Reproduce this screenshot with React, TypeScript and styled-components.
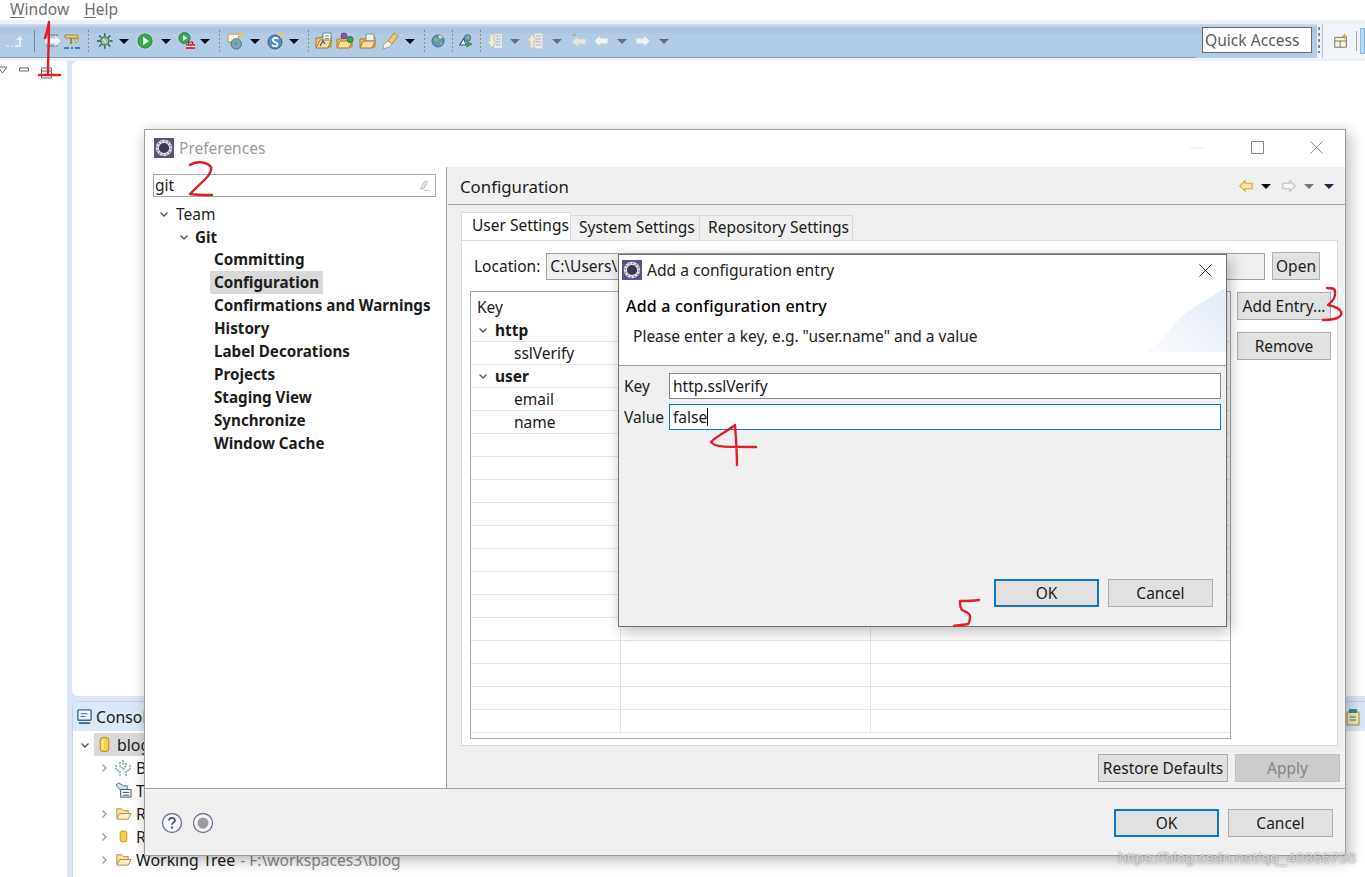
import React from 'react';
import styled, { createGlobalStyle, css } from 'styled-components';

const Global = createGlobalStyle`
  html, body { margin: 0; padding: 0; background: #fff; }
  body { font-family: "Noto Sans", "Open Sans", sans-serif; color: #1a1a1a; }
  * { box-sizing: border-box; }
`;

const Page = styled.div`
  position: relative; width: 1365px; height: 877px; overflow: hidden; background: #fff;
  display: flex; flex-direction: column;
`;
const MenuBar = styled.div`
  height: 20px; flex: none; display: flex; gap: 15px; padding-left: 10px;
  font-size: 15.6px; line-height: 18px; color: #6f6f6f;
  span u { text-underline-offset: 2px; }
`;
const Toolbar = styled.div`
  height: 41px; flex: none; display: flex; background: #eef2f8; padding-top: 4px;
`;
const ToolStrip = styled.div`
  width: 1317px; height: 34px; flex: none; position: relative; display: flex; align-items: center;
  background: linear-gradient(#cfdfef 0, #adc5df 4px, #adc5df 9px, #b2cce6 9px, #b2cce6 100%);
  &::after { content: ""; position: absolute; left: 0; bottom: 0; width: 1196px; height: 1px; background: #8b9ab5; }
`;
const ToolCell = styled.div<{ $w: number }>`
  width: ${p => p.$w}px; flex: none; display: flex; align-items: center; justify-content: center; height: 20px;
`;
const Caret = styled.i<{ $c?: string }>`
  display: block; width: 0; height: 0;
  border-left: 5px solid transparent; border-right: 5px solid transparent;
  border-top: 5.5px solid ${p => p.$c || '#0a0a14'};
`;
const Sep = styled.i<{ $solid?: boolean }>`
  display: block; width: 1px; height: 22px;
  background: ${p => (p.$solid ? '#6f88a6' : 'repeating-linear-gradient(#8d8d7c 0 2px, transparent 2px 4px)')};
`;
const QuickAccess = styled.div`
  position: absolute; left: 1202px; top: 3px; width: 110px; height: 26px; z-index: 1;
  background: #fff; border: 1px solid #6a6a6a; font-size: 15.6px; line-height: 24px; padding-left: 2px; color: #5d5d5d; white-space: nowrap;
`;
const Grip = styled.i`
  position: absolute; left: 1318px; top: 3px; width: 2px; height: 26px; z-index: 1;
  background: repeating-linear-gradient(#7c8797 0 3px, transparent 3px 6px);
`;
const PerspectiveBar = styled.div`
  flex: 1; height: 34px; margin-left: 5px; border-left: 1px solid #a9bfdc; display: flex; align-items: center;
  background: #f1f4fa; padding-left: 10px;
`;
const PerspSep = styled.i`
  display: block; width: 1px; height: 20px; background: #a5a5a5; margin: 0 3px 0 7px;
`;
const PerspActive = styled.i`
  display: block; flex: 1; height: 26px; background: #bcd6f3; border: 1px solid #8cb4e3;
`;

const Workspace = styled.div`
  flex: 1; display: flex; min-height: 0;
`;
const LeftPane = styled.div`
  width: 67px; flex: none; background: #fff; display: flex; gap: 11px; align-items: flex-start; padding-top: 4px; margin-left: -2px;
`;
const Center = styled.div`
  flex: 1; display: flex; flex-direction: column; padding-left: 5px; background: #dbe5f5; min-width: 0; margin-left: 2px;
`;
const Editor = styled.div`
  height: 635px; flex: none; background: #fff; border-radius: 6px 0 0 6px; margin-bottom: 5px;
`;
const ConsolePanel = styled.div`
  flex: 1; background: #fff; border-top-left-radius: 8px; overflow: hidden; display: flex; flex-direction: column;
  border-left: 1px solid #c4d1e6;
`;
const ConsoleTabs = styled.div`
  height: 30px; flex: none; background: #dce8f7; border-top: 1px solid #c2d0e6; display: flex; align-items: center;
  padding-left: 3px; gap: 3px; font-size: 15.8px; justify-content: flex-start; position: relative;
`;
const ConsoleTrailing = styled.div`
  position: absolute; right: 3px; top: 6px; display: flex;
`;
const ConsoleTree = styled.div`
  display: flex; flex-direction: column; padding-top: 2px;
`;
const ConsoleRow = styled.div<{ $depth: number }>`
  height: 23px; display: flex; align-items: center; font-size: 15.9px; white-space: nowrap;
  padding-left: ${p => p.$depth}px;
`;
const Chev = styled.span<{ $w?: number }>`
  width: ${p => p.$w ?? 14}px; flex: none; display: flex; align-items: center; justify-content: flex-start;
`;
const Picked = styled.span`
  display: flex; align-items: center; gap: 4px; height: 23px; background: #d9d9d9; padding: 0 30px 0 2px;
`;
const Muted = styled.span`
  color: #8b8b8b; margin-left: 5px; font-size: 15.6px;
`;
const RowIcon = styled.span`
  width: 20px; flex: none; display: flex; justify-content: center; margin-right: 3px;
`;

const PrefWindow = styled.div`
  position: absolute; left: 144px; top: 129px; width: 1202px; height: 727px; z-index: 2;
  background: #fff; border: 1px solid #9d9d9d;
  box-shadow: 3px 4px 14px rgba(0,0,0,.3); display: flex; flex-direction: column;
`;
const TitleBar = styled.div`
  height: 37px; flex: none; display: flex; align-items: center; padding: 0 0 2px 9px; font-size: 15.5px; color: #9a9a9a; gap: 5px; position: relative;
`;
const WinControls = styled.div`
  margin-left: auto; display: flex; align-items: center;
`;
const WinBtn = styled.span<{ $w: number }>`
  width: ${p => p.$w}px; display: flex; justify-content: center; align-items: center;
`;
const PrefBody = styled.div`
  height: 621px; flex: none; display: flex;
`;
const PrefNav = styled.div`
  width: 302px; flex: none; border-right: 1px solid #a0a0a0; padding: 7px 0 0 8px; display: flex; flex-direction: column;
`;
const NavSearch = styled.div`
  width: 283px; height: 23px; flex: none; border: 1px solid #a9a9a9; font-size: 15.5px; line-height: 21px; padding-left: 1px;
  display: flex; justify-content: space-between; align-items: center; padding-right: 3px; color: #222;
`;
const NavTree = styled.div`
  margin-top: 5px; display: flex; flex-direction: column;
`;
const NavRow = styled.div<{ $indent: number; $strong?: boolean }>`
  height: 23px; display: flex; align-items: center; padding-left: ${p => p.$indent}px; white-space: nowrap;
  font-size: ${p => (p.$strong ? 15.2 : 15.5)}px;
  font-weight: ${p => (p.$strong ? 700 : 400)}; color: #1c1c1c;
`;
const NavLabel = styled.span<{ $sel?: boolean }>`
  padding: 0 4px; height: 23px; line-height: 22px;
  ${p => p.$sel && css`background: #d9d9d9;`}
`;
const PrefMain = styled.div`
  flex: 1; min-width: 0; background: #f0f0f0; display: flex; flex-direction: column;
`;
const MainHead = styled.div`
  height: 38px; flex: none; border-bottom: 1px solid #a3a3a3; display: flex; align-items: center; padding: 1px 0 0 12px;
  font-size: 16.8px; color: #1c1c1c; margin-left: 1px;
`;
const HeadNav = styled.div`
  margin-left: auto; display: flex; align-items: center; gap: 10px; padding-right: 11px;
`;
const HeadGroup = styled.div`
  display: flex; align-items: center; gap: 7px;
`;
const Tabs = styled.div`
  margin: 7px 0 0 14px; height: 28px; flex: none; display: flex; align-items: flex-end; font-size: 15.5px; white-space: nowrap;
`;
const Tab = styled.div<{ $active?: boolean; $w: number }>`
  width: ${p => p.$w}px; border: 1px solid #d9d9d9;
  ${p => p.$active
    ? css`height: 28px; line-height: 25px; background: #fff; border-bottom: none; padding-left: 10px;`
    : css`height: 25px; line-height: 23px; background: #f0f0f0; border-left: none; border-bottom: none; padding-left: 8px;`}
`;
const TabPanel = styled.div`
  height: 506px; flex: none; margin: 0 7px 0 14px; background: #fff; border: 1px solid #d9d9d9; display: flex; flex-direction: column;
  padding-top: 11px;
`;
const LocationRow = styled.div`
  display: flex; align-items: center; height: 28px; padding: 0 17px 0 12px; font-size: 15.5px; flex: none;
`;
const LocationInput = styled.div`
  flex: 1; height: 27px; margin: 0 7px 0 6px; background: #f0f0f0; border: 1px solid #9f9f9f; padding-left: 3px; line-height: 25px;
`;
const Btn = styled.div<{ $w: number; $primary?: boolean; $disabled?: boolean }>`
  width: ${p => p.$w}px; height: 28px; flex: none; text-align: center; font-size: 15.5px; line-height: 26px; color: #1c1c1c;
  background: #e1e1e1; border: 1px solid #adadad; white-space: nowrap;
  ${p => p.$primary && css`border: 2px solid #0a78c8; line-height: 24px;`}
  ${p => p.$disabled && css`background: #cccccc; border-color: #bfbfbf; color: #858585;`}
`;
const TableRow = styled.div`
  display: flex; margin-top: 11px; padding-left: 8px; flex: 1; min-height: 0; margin-bottom: 6px;
`;
const Table = styled.div`
  width: 761px; flex: none; border: 1px solid #a8a8a8; display: flex; flex-direction: column; overflow: hidden; padding-top: 4px;
`;
const Row = styled.div<{ $head?: boolean }>`
  height: 23px; flex: none; display: grid; grid-template-columns: 150px 250px 1fr; font-size: 15.5px;
  ${p => (p.$head ? css`padding-bottom: 3px;` : css`border-bottom: 1px solid #e4e4e4;`)}
`;
const Cell = styled.div<{ $indent?: number; $strong?: boolean }>`
  border-right: 1px solid #e4e4e4; display: flex; align-items: center; padding-left: ${p => p.$indent ?? 6}px;
  font-weight: ${p => (p.$strong ? 700 : 400)}; white-space: nowrap;
  &:last-child { border-right: none; }
`;
const SideButtons = styled.div`
  display: flex; flex-direction: column; gap: 12px; margin-left: 6px; padding-top: 1px;
`;
const BottomButtons = styled.div`
  display: flex; justify-content: flex-end; gap: 7px; padding: 8px 5px 0 0; flex: none;
`;
const PrefFooter = styled.div`
  flex: 1; background: #f0f0f0; border-top: 1px solid #a3a3a3; display: flex; align-items: center; padding: 2px 12px 0 16px; gap: 9px;
`;
const FooterButtons = styled.div`
  margin-left: auto; display: flex; gap: 9px;
`;

const Dialog = styled.div`
  position: absolute; left: 618px; top: 254px; width: 609px; height: 373px; z-index: 3;
  background: #f0f0f0; border: 1px solid #6f6f6f; box-shadow: 3px 4px 14px rgba(0,0,0,.28); display: flex; flex-direction: column;
`;
const DialogHead = styled.div`
  height: 111px; flex: none; position: relative; background: #fff; border-bottom: 1px solid #a0a0a0; overflow: hidden;
`;
const DialogTitle = styled.div`
  height: 30px; display: flex; align-items: center; padding-left: 3px; gap: 5px; font-size: 15.6px; color: #222; white-space: nowrap;
`;
const DialogClose = styled.span`
  margin-left: auto; margin-right: 14px; display: flex;
`;
const DialogHeading = styled.div`
  margin: 10px 0 0 7px; font-size: 16px; font-weight: 500; letter-spacing: .2px; color: #000; line-height: 22px; white-space: nowrap;
`;
const DialogDesc = styled.div`
  margin: 9px 0 0 14px; font-size: 15.5px; color: #222; line-height: 20px; white-space: nowrap;
`;
const Wedge = styled.svg`
  position: absolute; right: 0; top: 30px;
`;
const DialogForm = styled.div`
  padding: 7px 5px 0 5px; display: grid; grid-template-columns: 45px 1fr; row-gap: 5px; align-items: center; font-size: 15.5px;
`;
const Field = styled.div<{ $focus?: boolean }>`
  height: 26px; background: #fff; border: 1px solid ${p => (p.$focus ? '#0a78c8' : '#8a8a8a')}; padding-left: 3px; line-height: 24px; font-size: 15.5px;
  display: flex; align-items: center;
`;
const Cursor = styled.i`
  display: block; width: 1px; height: 18px; background: #000;
`;
const DialogButtons = styled.div`
  margin-top: auto; display: flex; justify-content: flex-end; gap: 9px; padding: 0 13px 19px 0;
`;
const Annotations = styled.svg`
  position: absolute; left: 0; top: 0; z-index: 4; pointer-events: none;
`;
const Watermark = styled.div`
  position: absolute; right: 9px; bottom: 10px; z-index: 5; font-family: "Liberation Sans", sans-serif; font-size: 15.5px; line-height: 18px;
  color: rgba(255,255,255,.6); text-shadow: 0 0 2px rgba(90,90,90,.85); white-space: nowrap;
`;

const Ic = ({ n, s = 18 }: { n: string; s?: number }) => {
  const svg = (c: React.ReactNode) => <svg width={s} height={s} viewBox="0 0 18 18" fill="none">{c}</svg>;
  switch (n) {
    case 'ret': return svg(<><path d="M1 14h3M6 14h2" stroke="#d8e0ea" strokeWidth="1.6" /><path d="M10 14h5V6" stroke="#e6ecf3" strokeWidth="2" /><path d="M11 8l4-4 3 4z" fill="#eef2f6" /></>);
    case 'lines': return svg(<><path d="M2 3h12M2 14h12" stroke="#7f8fa3" strokeWidth="1.6" /><path d="M1 6.5h10V3.5L17 9l-6 5.5v-3H1z" fill="#f3f5f7" stroke="#c7d1dc" strokeWidth=".6" /></>);
    case 'tee': return svg(<><path d="M2 3h13v3H2z" fill="#ecd37a" stroke="#a08537" /><path d="M8 6v6" stroke="#a08537" strokeWidth="2.2" /><path d="M11 7h5l-2.5 4z" fill="#f0d97f" stroke="#a08537" strokeWidth=".6" /><path d="M1 16h5M12 16h5" stroke="#2f5f96" strokeWidth="1.5" /><path d="M8 16h2" stroke="#2f5f96" strokeWidth="1.5" /></>);
    case 'bug': return svg(<><circle cx="9" cy="9" r="4.2" fill="#8fc3a0" stroke="#2d5b4a" /><path d="M7.5 7.5l3 3" stroke="#d3ecd9" strokeWidth="1.4" /><path d="M9 1v3M9 14v3M1 9h3M14 9h3M3.3 3.3l2.2 2.2M14.7 3.3l-2.2 2.2M3.3 14.7l2.2-2.2M14.7 14.7l-2.2-2.2" stroke="#2d4b4a" strokeWidth="1.3" /></>);
    case 'run': return svg(<><circle cx="9" cy="9" r="7.8" fill="#38a94f" stroke="#d8ecd0" strokeWidth="1" /><circle cx="9" cy="9" r="7.2" stroke="#1a8038" strokeWidth=".8" /><path d="M7 4.8l6 4.2-6 4.2z" fill="#f7fbef" /></>);
    case 'ext': return svg(<><circle cx="6.5" cy="6" r="5.6" fill="#38a94f" stroke="#177a36" strokeWidth=".8" /><path d="M5 3.2l4.4 2.8L5 8.8z" fill="#fff" /><path d="M8 12h9v5H8z" fill="#e2343c" /><path d="M10.5 12v-2h4v2" stroke="#b3141c" strokeWidth="1.2" /><path d="M8 14.4h9" stroke="#fff" /></>);
    case 'newserver': return svg(<><path d="M1 2h11v8H1z" fill="#f9f5e2" stroke="#b99a4a" /><circle cx="9.5" cy="12" r="5.4" fill="#7ea6bd" stroke="#4b7596" /><path d="M8 9l3 1-1 3-3 1z" fill="#6f9f62" /><path d="M14 0v6M11 3h6" stroke="#e8cb55" strokeWidth="1.7" /></>);
    case 'spring': return svg(<><circle cx="8" cy="10" r="7" fill="#5a8fbd" stroke="#2d5c8a" /><path d="M11 7C9 5 5 6 6 8.5S11 10 10.5 12.5 6.500 14.500 5 13" stroke="#fff" strokeWidth="1.7" /><path d="M14 0v6M11 3h6" stroke="#e8cb55" strokeWidth="1.7" /></>);
    case 'open1': return svg(<><path d="M1 6h5l1-2h9v11H1z" fill="#f1c869" stroke="#a87b24" /><path d="M8 1h8v9H8z" fill="#fff" stroke="#6d87ad" /><path d="M10 4h4M10 6.500h4" stroke="#6d87ad" /><path d="M5 8l-4 8h12l3-8z" fill="#f8dd98" stroke="#a87b24" /><path d="M5 14l3-5 2 3" stroke="#2f5f96" strokeWidth="1.3" /></>);
    case 'open2': return svg(<><path d="M1 7h5l1-2h9v10H1z" fill="#f1c869" stroke="#a87b24" /><path d="M4 9L1 16h12l3-7z" fill="#f8dd98" stroke="#a87b24" /><circle cx="8" cy="4" r="3" fill="#7a5fb0" stroke="#5a4a85" /><circle cx="14" cy="7.500" r="3" fill="#3f9f55" stroke="#2f7a3b" /></>);
    case 'open3': return svg(<><path d="M1 7h5l1-2h9v10H1z" fill="#f1c869" stroke="#a87b24" /><path d="M7 2h8v7H7z" fill="#eef1f4" stroke="#8b95a1" /><path d="M4 9L1 16h12l3-7z" fill="#f8dd98" stroke="#a87b24" /></>);
    case 'brush': return svg(<><path d="M12 1l4 3-6 8-4-3z" fill="#f0c97a" stroke="#b58b3a" /><path d="M6 9l4 3-3 3-6 2 1-5z" fill="#f7f3e4" stroke="#9a8a66" strokeWidth=".7" /></>);
    case 'globe': return svg(<><circle cx="9" cy="9" r="7.8" fill="#5a93bd" stroke="#2c5e86" /><path d="M4 5l4 0 2 3-3 3-3-3zM11 10l4 0-2 5-2-2z" fill="#86b673" /><path d="M9 2l2 4 4-1-2-3z" fill="#e6e2a6" /></>);
    case 'exttool': return svg(<><circle cx="11" cy="5" r="4.200" fill="#6a9cc0" stroke="#3f6b90" /><path d="M10 3l3 0 0 3-3 0z" fill="#8cbb6e" /><path d="M1 14l5-8 3 8z" fill="#fff" stroke="#2f5280" strokeWidth="1.3" /><path d="M10 9l7 4-7 4z" fill="#39a24e" stroke="#1d7a36" strokeWidth=".6" /></>);
    case 'docdown': return svg(<><path d="M7 1h9v16H7z" fill="#e6eaef" stroke="#b9c3cf" /><path d="M9 4h5M9 7h5M9 10h5M9 13h5" stroke="#a8b1bb" /><path d="M3 2h4v7h3l-5 7-5-7h3z" fill="#eee9cf" stroke="#c2c0a8" strokeWidth=".7" /></>);
    case 'docup': return svg(<><path d="M7 1h9v16H7z" fill="#e6eaef" stroke="#b9c3cf" /><path d="M9 4h5M9 7h5M9 10h5M9 13h5" stroke="#a8b1bb" /><path d="M5 2l5 7H7v7H3V9H0z" fill="#eee9cf" stroke="#c2c0a8" strokeWidth=".7" /></>);
    case 'lastedit': return svg(<><path d="M8 4L2 9.500l6 5.500v-3h8V7H8z" fill="#e8e8da" stroke="#c9d1d8" /><path d="M2 2l2 2M5 1v3" stroke="#9aa6b2" /></>);
    case 'back': return svg(<path d="M8 3L2 9l6 6v-3h8V6H8z" fill="#eff2f5" stroke="#c2cad3" />);
    case 'fwd': return svg(<path d="M10 3l6 6-6 6v-3H2V6h8z" fill="#eff2f5" stroke="#c2cad3" />);
    case 'backY': return svg(<path d="M8 3L2 9l6 6v-3h8V6H8z" fill="#fbe5a0" stroke="#d3a93d" strokeWidth="1.2" />);
    case 'fwdG': return svg(<path d="M10 3l6 6-6 6v-3H2V6h8z" fill="#f7f7f7" stroke="#bdbdbd" strokeWidth="1.2" />);
    case 'persp': return svg(<><path d="M2 5h13v11H2z" fill="#fbf6e2" stroke="#6b6b55" /><path d="M2 9h13M8 9v7" stroke="#6b6b55" /><path d="M13 1l1 2 2 1-2 1-1 2-1-2-2-1 2-1z" fill="#e7b93a" stroke="#a5832a" strokeWidth=".5" /></>);
    case 'eclipse': return svg(<><path d="M0 0h18v18H0z" fill="#5d4f80" /><circle cx="9" cy="9" r="7.4" fill="#e7e5ee" /><circle cx="9" cy="9" r="4.6" fill="#3a3654" /><circle cx="9" cy="9" r="6.1" stroke="#8c8ca0" strokeWidth="1.6" strokeDasharray="1.6 1.6" /></>);
    case 'eraser': return svg(<><path d="M4 13l5-9h4l-5 9z" fill="#e6e6e6" stroke="#b8b8b8" /><path d="M9 15h6" stroke="#bbb" /></>);
    case 'console': return svg(<><rect x="2" y="2" width="14" height="11" rx="1" fill="#eef4fb" stroke="#35699c" strokeWidth="1.5" /><path d="M5 6h7M5 9h5" stroke="#35699c" /><path d="M3 16h12" stroke="#35699c" strokeWidth="1.8" /></>);
    case 'repo': return svg(<><rect x="4.500" y="1.500" width="9" height="15" rx="3" fill="#f4cf4a" stroke="#b08a1e" /><path d="M7 4v10" stroke="#fbeca6" strokeWidth="2" /></>);
    case 'branches': return svg(<><path d="M9 1v5M6 3v4l3 3 3-3V3M2 6v4l4 3v4M16 6v4l-4 3v4" stroke="#5c9c9a" strokeWidth="1.3" strokeDasharray="2 .7" /></>);
    case 'tags': return svg(<><path d="M1 3l3-2 5 3 4 0v5H6z" fill="#cfe0f0" stroke="#4d7aa8" /><path d="M6 8h11v8H6z" fill="#fff" stroke="#33506f" /><path d="M8 11h7M8 14h7" stroke="#33506f" /></>);
    case 'folder': return svg(<><path d="M2 14V4h5l2 2h5v3" fill="#f7e2ab" stroke="#b18b3d" /><path d="M2 15l3-6h12l-3 6z" fill="#fbeec6" stroke="#b18b3d" /></>);
    case 'sm': return svg(<rect x="5" y="2.500" width="8" height="13" rx="2.500" fill="#f4cf4a" stroke="#b08a1e" />);
    case 'task': return svg(<><path d="M3 4h12v13H3z" fill="#f3e7b4" stroke="#a68a3c" /><path d="M5 1h8v4H5z" fill="#2f8f9a" /><path d="M6 9h6M6 12h6" stroke="#2f7f8a" /></>);
    default: return null;
  }
};
const Tri = ({ d = 'down', c = '#555' }: { d?: 'down' | 'right'; c?: string }) => (
  <svg width="10" height="10" viewBox="0 0 10 10" fill="none">
    {d === 'down' ? <path d="M1.500 3.500L5 7l3.500-3.500" stroke={c} strokeWidth="1.3" /> : <path d="M3.500 1.500L7 5 3.500 8.500" stroke={c} strokeWidth="1.3" />}
  </svg>
);

type T = { k: 'i' | 'c' | 'g' | 's' | 'l'; n?: string; x: number };
const tools: T[] = [
  { k: 'i', n: 'ret', x: 20 }, { k: 'l', x: 34 }, { k: 'i', n: 'lines', x: 51 }, { k: 'i', n: 'tee', x: 74 }, { k: 's', x: 88 },
  { k: 'i', n: 'bug', x: 103 }, { k: 'c', x: 123 }, { k: 'i', n: 'run', x: 145 }, { k: 'c', x: 165 }, { k: 'i', n: 'ext', x: 187 }, { k: 'c', x: 207 }, { k: 's', x: 219 },
  { k: 'i', n: 'newserver', x: 234 }, { k: 'c', x: 254 }, { k: 'i', n: 'spring', x: 277 }, { k: 'c', x: 296 }, { k: 's', x: 308 },
  { k: 'i', n: 'open1', x: 321 }, { k: 'i', n: 'open2', x: 345 }, { k: 'i', n: 'open3', x: 367 }, { k: 'i', n: 'brush', x: 393 }, { k: 'c', x: 412 }, { k: 's', x: 424 },
  { k: 'i', n: 'globe', x: 438 }, { k: 's', x: 452 }, { k: 'i', n: 'exttool', x: 466 }, { k: 's', x: 480 },
  { k: 'i', n: 'docdown', x: 494 }, { k: 'g', x: 515 }, { k: 'i', n: 'docup', x: 536 }, { k: 'g', x: 557 },
  { k: 'i', n: 'lastedit', x: 578 }, { k: 'i', n: 'back', x: 602 }, { k: 'g', x: 622 }, { k: 'i', n: 'fwd', x: 643 }, { k: 'g', x: 664 },
];
const cellWidth = (i: number) => {
  const prevEdge = i === 0 ? 0 : (tools[i - 1].x + tools[i].x) / 2;
  const nextEdge = i === tools.length - 1 ? tools[i].x + 10 : (tools[i].x + tools[i + 1].x) / 2;
  return nextEdge - prevEdge;
};

const navItems = ['Committing', 'Configuration', 'Confirmations and Warnings', 'History', 'Label Decorations', 'Projects', 'Staging View', 'Synchronize', 'Window Cache'];
const emptyRows = Array.from({ length: 13 });

export default function App() {
  return (
    <Page>
      <Global />
      <MenuBar>
        <span><u>W</u>indow</span>
        <span><u>H</u>elp</span>
      </MenuBar>
      <Toolbar>
        <ToolStrip>
          {tools.map((t, i) => (
            <ToolCell key={i} $w={cellWidth(i)}>
              {t.k === 'i' && <Ic n={t.n!} />}
              {t.k === 'c' && <Caret />}
              {t.k === 'g' && <Caret $c="#5f6f86" />}
              {t.k === 's' && <Sep />}
              {t.k === 'l' && <Sep $solid />}
            </ToolCell>
          ))}
          <QuickAccess>Quick Access</QuickAccess>
          <Grip />
        </ToolStrip>
        <PerspectiveBar>
          <Ic n="persp" s={16} />
          <PerspSep />
          <PerspActive />
        </PerspectiveBar>
      </Toolbar>
      <Workspace>
        <LeftPane>
          <svg width="10" height="10" viewBox="0 0 10 10" fill="none"><path d="M0 2h9L4.500 8z" fill="#fff" stroke="#666" /></svg>
          <svg width="11" height="10" viewBox="0 0 11 10" fill="none"><path d="M.5 3h9v3h-9z" fill="#fff" stroke="#666" /></svg>
          <svg width="11" height="14" viewBox="0 0 11 14" fill="none"><path d="M.5 3h10v10H.5zM.5 6h10" stroke="#666" /></svg>
        </LeftPane>
        <Center>
          <Editor />
          <ConsolePanel>
            <ConsoleTabs>
              <Ic n="console" s={17} />
              <span>Console</span>
              <ConsoleTrailing><Ic n="task" s={18} /></ConsoleTrailing>
            </ConsoleTabs>
            <ConsoleTree>
              <ConsoleRow $depth={7}>
                <Chev $w={14}><Tri /></Chev>
                <Picked><Ic n="repo" s={17} /><span>blog</span></Picked>
              </ConsoleRow>
              <ConsoleRow $depth={26}><Chev><Tri d="right" c="#999" /></Chev><RowIcon><Ic n="branches" s={18} /></RowIcon>Branches</ConsoleRow>
              <ConsoleRow $depth={26}><Chev /><RowIcon><Ic n="tags" s={17} /></RowIcon>Tags</ConsoleRow>
              <ConsoleRow $depth={26}><Chev><Tri d="right" c="#999" /></Chev><RowIcon><Ic n="folder" s={17} /></RowIcon>References</ConsoleRow>
              <ConsoleRow $depth={26}><Chev><Tri d="right" c="#999" /></Chev><RowIcon><Ic n="sm" s={15} /></RowIcon>Remotes</ConsoleRow>
              <ConsoleRow $depth={26}><Chev><Tri d="right" c="#999" /></Chev><RowIcon><Ic n="folder" s={17} /></RowIcon>Working Tree<Muted>- F:\workspaces3\blog</Muted></ConsoleRow>
            </ConsoleTree>
          </ConsolePanel>
        </Center>
      </Workspace>

      <PrefWindow>
        <TitleBar>
          <Ic n="eclipse" s={20} />
          <span>Preferences</span>
          <WinControls>
            <WinBtn $w={60}><svg width="14" height="2"><path d="M0 1h14" stroke="#ececec" /></svg></WinBtn>
            <WinBtn $w={60}><svg width="13" height="13"><path d="M.5.5h12v12H.5z" fill="none" stroke="#888" /></svg></WinBtn>
            <WinBtn $w={58}><svg width="13" height="13"><path d="M.5.5l12 12M12.5.5l-12 12" stroke="#888" /></svg></WinBtn>
          </WinControls>
        </TitleBar>
        <PrefBody>
          <PrefNav>
            <NavSearch>git<Ic n="eraser" s={15} /></NavSearch>
            <NavTree>
              <NavRow $indent={6}><Chev $w={17}><Tri /></Chev>Team</NavRow>
              <NavRow $indent={26} $strong><Chev $w={16}><Tri /></Chev>Git</NavRow>
              {navItems.map(n => (
                <NavRow key={n} $indent={57} $strong><NavLabel $sel={n === 'Configuration'}>{n}</NavLabel></NavRow>
              ))}
            </NavTree>
          </PrefNav>
          <PrefMain>
            <MainHead>
              Configuration
              <HeadNav>
                <HeadGroup><Ic n="backY" s={16} /><Caret /></HeadGroup>
                <HeadGroup><Ic n="fwdG" s={16} /><Caret $c="#777" /></HeadGroup>
                <Caret $c="#2c2450" />
              </HeadNav>
            </MainHead>
            <Tabs>
              <Tab $active $w={110}>User Settings</Tab>
              <Tab $w={129}>System Settings</Tab>
              <Tab $w={153}>Repository Settings</Tab>
            </Tabs>
            <TabPanel>
              <LocationRow>
                Location:
                <LocationInput>C:\Users\</LocationInput>
                <Btn $w={48}>Open</Btn>
              </LocationRow>
              <TableRow>
                <Table>
                  <Row $head><Cell>Key</Cell><Cell /><Cell /></Row>
                  <Row><Cell $strong $indent={7}><Chev $w={17}><Tri /></Chev>http</Cell><Cell /><Cell /></Row>
                  <Row><Cell $indent={43}>sslVerify</Cell><Cell /><Cell /></Row>
                  <Row><Cell $strong $indent={7}><Chev $w={17}><Tri /></Chev>user</Cell><Cell /><Cell /></Row>
                  <Row><Cell $indent={43}>email</Cell><Cell /><Cell /></Row>
                  <Row><Cell $indent={43}>name</Cell><Cell /><Cell /></Row>
                  {emptyRows.map((_, i) => <Row key={i}><Cell /><Cell /><Cell /></Row>)}
                </Table>
                <SideButtons>
                  <Btn $w={94}>Add Entry...</Btn>
                  <Btn $w={94}>Remove</Btn>
                </SideButtons>
              </TableRow>
            </TabPanel>
            <BottomButtons>
              <Btn $w={130}>Restore Defaults</Btn>
              <Btn $w={105} $disabled>Apply</Btn>
            </BottomButtons>
          </PrefMain>
        </PrefBody>
        <PrefFooter>
          <svg width="22" height="22" viewBox="0 0 22 22" fill="none"><circle cx="11" cy="11" r="9.500" fill="#f7f7fa" stroke="#6e7a91" strokeWidth="1.3" /><path d="M8 8.500C8 6.500 9.500 5.800 11 5.800s3 .9 3 2.600c0 2.200-3 2.200-3 4.400" stroke="#4a5670" strokeWidth="1.8" /><circle cx="11" cy="15.600" r="1.200" fill="#4a5670" /></svg>
          <svg width="22" height="22" viewBox="0 0 22 22" fill="none"><circle cx="11" cy="11" r="9.500" fill="#f7f7fa" stroke="#6e7a91" strokeWidth="1.3" /><circle cx="11" cy="11" r="5.500" fill="#9b9b9b" /></svg>
          <FooterButtons>
            <Btn $w={105} $primary>OK</Btn>
            <Btn $w={105}>Cancel</Btn>
          </FooterButtons>
        </PrefFooter>
      </PrefWindow>

      <Dialog>
        <DialogHead>
          <Wedge width="80" height="68" viewBox="0 0 80 68">
            <defs>
              <linearGradient id="wg" x1="0" y1="1" x2="1" y2="0">
                <stop offset="0" stopColor="#fafbfe" />
                <stop offset="1" stopColor="#e3ebf7" />
              </linearGradient>
            </defs>
            <path d="M0 67C20 55 30 30 55 18C65 12 72 7 80 3V67z" fill="url(#wg)" />
          </Wedge>
          <DialogTitle>
            <Ic n="eclipse" s={20} />
            <span>Add a configuration entry</span>
            <DialogClose><svg width="13" height="13"><path d="M.5.5l12 12M12.500.5l-12 12" stroke="#333" /></svg></DialogClose>
          </DialogTitle>
          <DialogHeading>Add a configuration entry</DialogHeading>
          <DialogDesc>Please enter a key, e.g. "user.name" and a value</DialogDesc>
        </DialogHead>
        <DialogForm>
          <span>Key</span><Field>http.sslVerify</Field>
          <span>Value</span><Field $focus>false<Cursor /></Field>
        </DialogForm>
        <DialogButtons>
          <Btn $w={105} $primary>OK</Btn>
          <Btn $w={105}>Cancel</Btn>
        </DialogButtons>
      </Dialog>

      <Annotations width="1365" height="877" viewBox="0 0 1365 877" fill="none" stroke="#dc1f2a" strokeWidth="2.4" strokeLinecap="round" strokeLinejoin="round">
        <path d="M45 38C47 32 48 27 49 22C49 40 48 58 48 75M39 75H60" />
        <path d="M190 165C195 161 206 161 211 167C213 175 200 183 190 194C197 195 205 195 212 195" />
        <path d="M1327 288C1331 288 1335 288 1335 291C1336 297 1332 302 1328 305C1333 306 1340 308 1341 312C1343 318 1333 320 1323 320" />
        <path d="M735 425C728 431 716 436 711 442C714 447 722 447 756 447M735 425C736 438 737 452 737 465" />
        <path d="M979 600C972 601 966 601 960 601C960 606 961 609 962 610C966 612 970 613 970 616C970 620 969 623 968 624C964 625 958 625 954 626" />
      </Annotations>
      <Watermark>https://blog.csdn.net/qq_40366738</Watermark>
    </Page>
  );
}
